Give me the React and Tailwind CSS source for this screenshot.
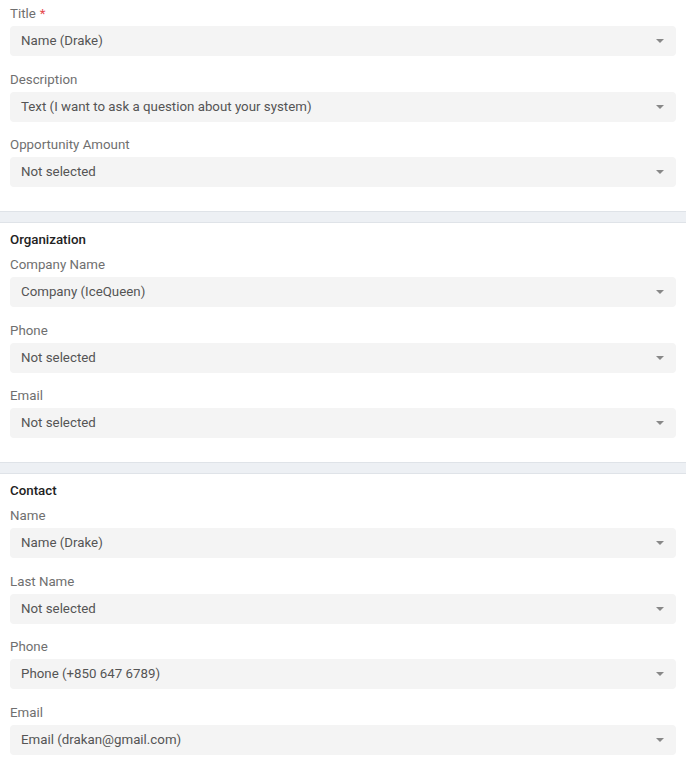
const sections = [
  {
    title: null,
    fields: [
      { label: "Title", required: true, value: "Name (Drake)" },
      { label: "Description", value: "Text (I want to ask a question about your system)" },
      { label: "Opportunity Amount", value: "Not selected" }
    ]
  },
  {
    title: "Organization",
    fields: [
      { label: "Company Name", value: "Company (IceQueen)" },
      { label: "Phone", value: "Not selected" },
      { label: "Email", value: "Not selected" }
    ]
  },
  {
    title: "Contact",
    fields: [
      { label: "Name", value: "Name (Drake)" },
      { label: "Last Name", value: "Not selected" },
      { label: "Phone", value: "Phone (+850 647 6789)" },
      { label: "Email", value: "Email (drakan@gmail.com)" }
    ]
  }
];

function Field({ label, required, value }) {
  return (
    <div className="mb-[14.5px]">
      <div className="h-[18px] leading-[18px] mb-[3px] text-[13.3px] text-[#6f6f6f]">
        {label}
        {required && <span className="text-[#e5484d] ml-1">*</span>}
      </div>
      <div className="h-[30px] rounded bg-[#f4f4f4] flex items-center justify-between pl-[11px] pr-[12px] text-[13.3px] text-[#555]">
        <span>{value}</span>
        <svg width="8" height="4" viewBox="0 0 8 4">
          <path d="M0 0h8L4 4z" fill="#888" />
        </svg>
      </div>
    </div>
  );
}

export default function App() {
  return (
    <div className="w-[686px] min-h-[774px] bg-white font-[Roboto,sans-serif]">
      {sections.map((s, i) => (
        <div key={i}>
          {i > 0 && (
            <div className="h-[12px] bg-[#edf0f4] border-y border-[#dfe3e8]" />
          )}
          <div className={(i === 0 ? "pt-[5px]" : "pt-2") + " pb-[9.5px] px-[10px]"}>
            {s.title && (
              <div className="h-[18px] leading-[18px] mb-[7px] text-[13.3px] font-medium text-[#222]">
                {s.title}
              </div>
            )}
            {s.fields.map((f, j) => (
              <Field key={j} {...f} />
            ))}
          </div>
        </div>
      ))}
    </div>
  );
}
